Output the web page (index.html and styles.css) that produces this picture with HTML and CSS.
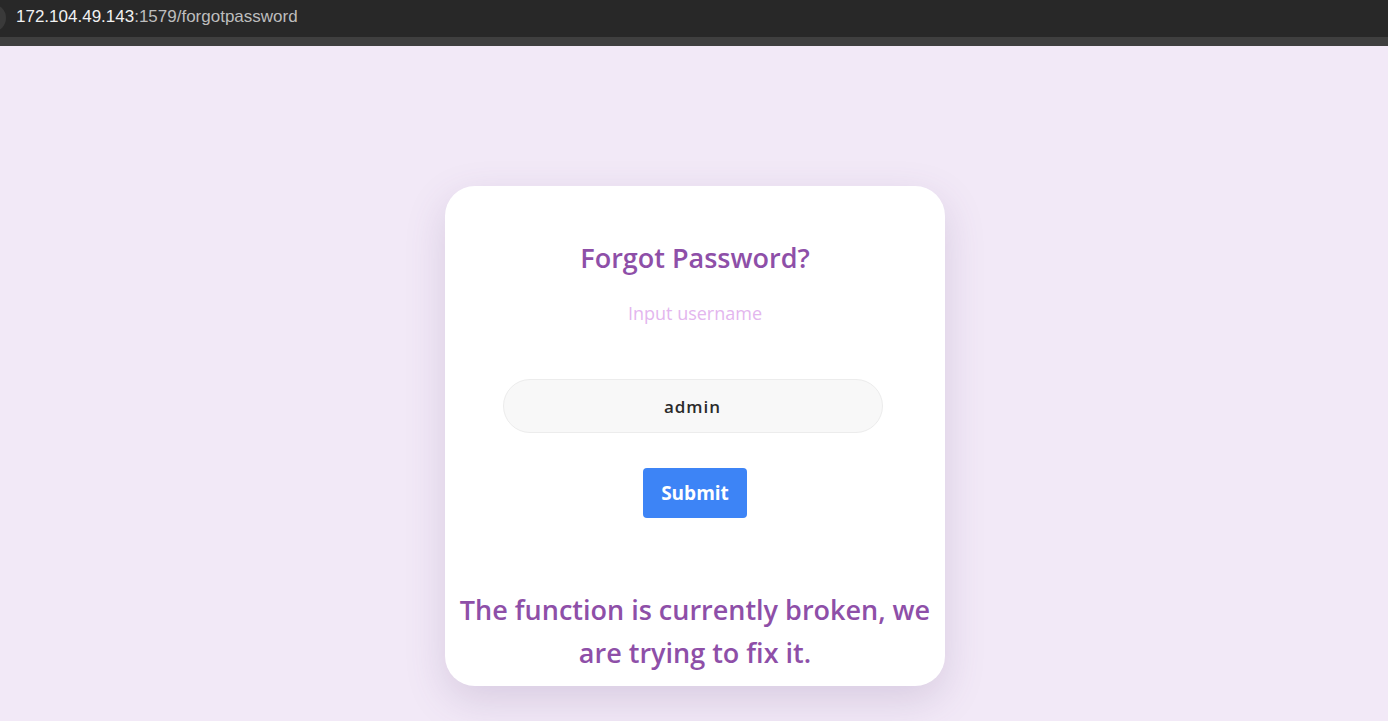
FILE: index.html
```html
<!DOCTYPE html>
<html lang="en">
<head>
<meta charset="utf-8">
<title>Forgot Password</title>
<link rel="stylesheet" href="styles.css">
</head>
<body>
<header class="browser-bar">
  <div class="address">
    <span class="site-icon"></span>
    <span class="host">172.104.49.143</span><span class="path">:1579/forgotpassword</span>
  </div>
  <div class="bar-divider"></div>
</header>
<main class="page">
  <section class="card">
    <h2 class="title">Forgot Password?</h2>
    <p class="subtitle">Input username</p>
    <input class="field" type="text" value="admin">
    <button class="submit" type="button">Submit</button>
    <p class="message">The function is currently broken, we are trying to fix it.</p>
  </section>
</main>
</body>
</html>
```

FILE: styles.css
```css
* { box-sizing: border-box; }
html, body { margin: 0; padding: 0; }
body {
  width: 1388px;
  height: 721px;
  overflow: hidden;
  background: #f2e9f7;
  font-family: "Open Sans", "Noto Sans", sans-serif;
}
.browser-bar {
  background: #282828;
}
.address {
  height: 37px;
  display: flex;
  align-items: center;
  position: relative;
  padding-left: 16px;
  font-family: "Liberation Sans", "DejaVu Sans", sans-serif;
  font-size: 17px;
  padding-bottom: 3px;
}
.site-icon {
  position: absolute;
  left: -22px;
  top: 4px;
  width: 28px;
  height: 28px;
  border-radius: 50%;
  background: #3a3a3a;
}
.host { color: #f1f1f1; }
.path { color: #bdbdbd; }
.bar-divider {
  height: 9px;
  background: #3f3f3f;
}
.page {
  display: flex;
  justify-content: center;
  padding-top: 140px;
  padding-left: 2px;
}
.card {
  width: 500px;
  height: 500px;
  background: #fff;
  border-radius: 30px;
  box-shadow: 0 14px 40px rgba(100, 70, 130, 0.18);
  display: flex;
  flex-direction: column;
  align-items: center;
  padding: 55px 10px 0;
}
.title {
  margin: 0;
  font-size: 27px;
  line-height: 34px;
  font-weight: 600;
  color: #8e4fa8;
}
.subtitle {
  margin: 27px 0 0;
  font-size: 18px;
  line-height: 22px;
  color: #e3b6ee;
}
.field {
  margin-top: 55px;
  margin-right: 5px;
  width: 380px;
  height: 54px;
  border-radius: 27px;
  border: 1px solid #ececec;
  background: #f8f8f8;
  text-align: center;
  font-family: inherit;
  font-size: 17px;
  font-weight: 600;
  letter-spacing: 1px;
  color: #2b2b2b;
  outline: none;
}
.submit {
  margin-top: 35px;
  width: 104px;
  height: 50px;
  border: none;
  border-radius: 4px;
  background: #3d84f6;
  color: #fff;
  font-family: inherit;
  font-size: 19px;
  font-weight: 700;
}
.message {
  margin: 70px 0 0;
  text-align: center;
  font-size: 27px;
  line-height: 43px;
  font-weight: 600;
  color: #8e4fa8;
}
```
